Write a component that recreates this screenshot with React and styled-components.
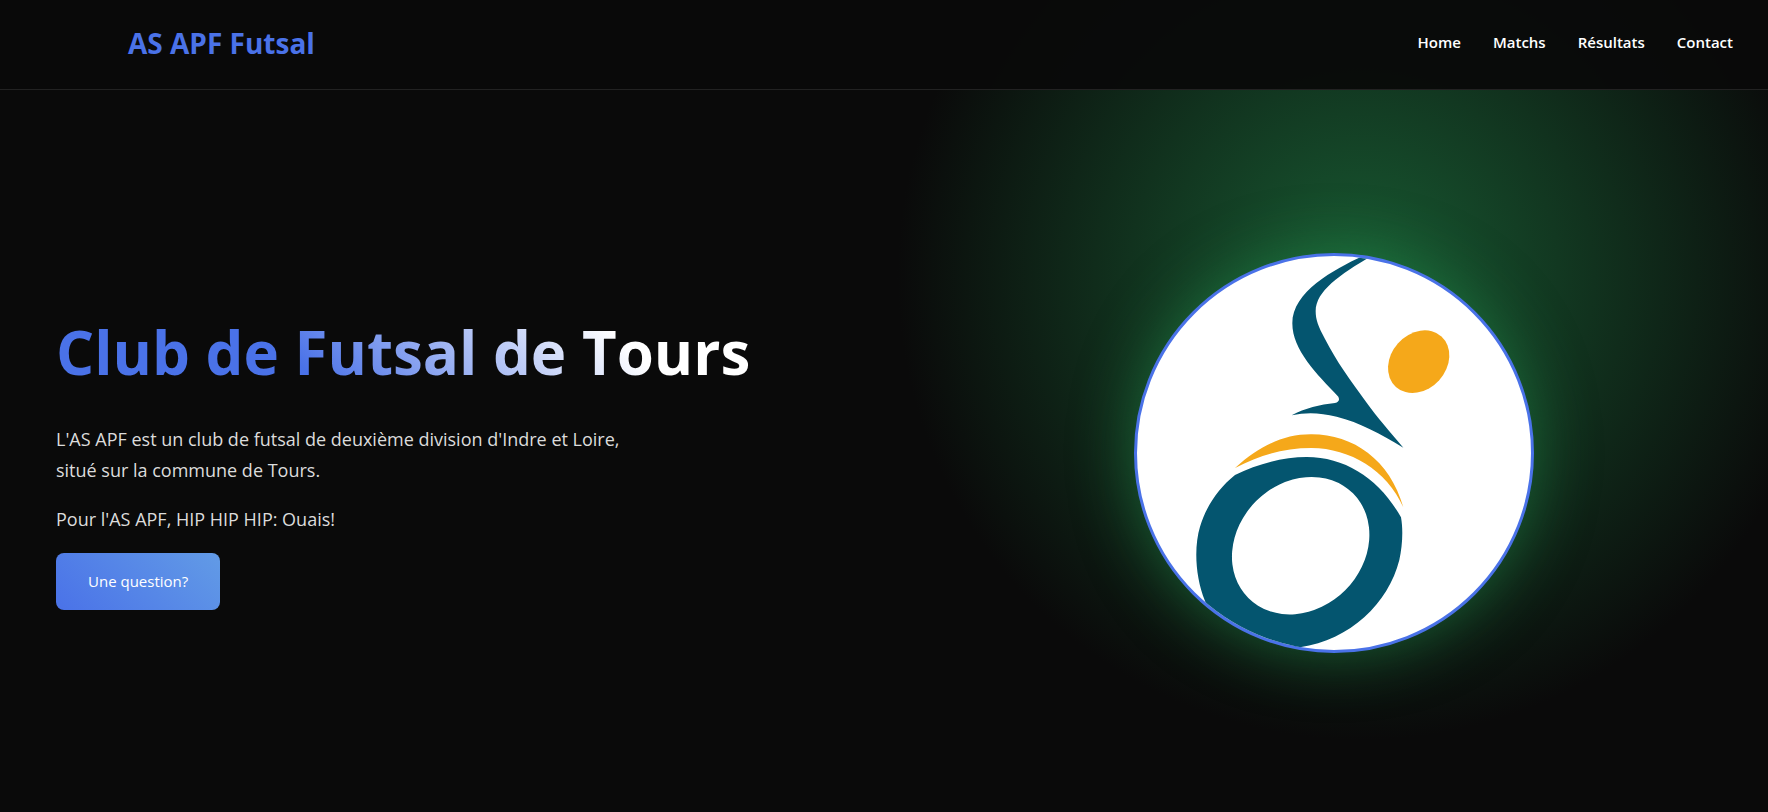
import React from "react";
import styled, { createGlobalStyle } from "styled-components";

const BLUE = "#4a72e8";
const TEAL = "#04556f";
const ORANGE = "#f5a81a";

const GlobalStyle = createGlobalStyle`
  * {
    box-sizing: border-box;
  }

  body {
    margin: 0;
    background: #0a0a0a;
    color: #fff;
    font-family: "Segoe UI", "Open Sans", "Noto Sans", sans-serif;
    line-height: 1.6;
  }
`;

const Page = styled("div")`
  display: flex;
  flex-direction: column;
  min-height: 100vh;
  background: radial-gradient(
    circle 464px at 77% 34%,
    #185a32 0%,
    #0a0a0a 100%
  );
`;

const Header = styled("header")`
  display: flex;
  align-items: center;
  justify-content: space-between;
  padding: 21px 35px 23px 128px;
  background: rgba(10, 10, 10, 0.95);
  border-bottom: 1px solid #222;
`;

const Brand = styled("a")`
  color: ${BLUE};
  font-size: 28px;
  font-weight: 700;
  text-decoration: none;
`;

const Nav = styled("nav")`
  display: flex;
  gap: 32px;
  padding-bottom: 2px;
`;

const NavLink = styled("a")`
  color: #fff;
  font-size: 15px;
  font-weight: 600;
  text-decoration: none;
`;

const Hero = styled("main")`
  flex: 1;
  display: grid;
  grid-template-columns: 1fr 1fr;
  gap: 72px;
  align-items: center;
  padding: 4px 32px 0 56px;
`;

const Content = styled("div")`
  display: flex;
  flex-direction: column;
  align-items: flex-start;
  padding-top: 18px;
`;

const Title = styled("h1")`
  margin: 0 0 34px;
  font-size: 60px;
  line-height: 76px;
  white-space: nowrap;
  color: transparent;
  background: linear-gradient(45deg, ${BLUE} 35%, #fff 80%);
  background-clip: text;
`;

const Text = styled("p")`
  max-width: 600px;
  margin: 0 0 18px;
  color: #dcdcdc;
  font-size: 18px;
  line-height: 31px;
`;

const Button = styled("button")`
  padding: 16px 32px;
  border: 0;
  border-radius: 8px;
  background: linear-gradient(45deg, ${BLUE}, #629be6);
  color: #fff;
  font-family: inherit;
  font-size: 15px;
  line-height: 25px;
  cursor: pointer;
`;

const Badge = styled("div")`
  justify-self: center;
  width: 400px;
  height: 400px;
  overflow: hidden;
  border: 3px solid ${BLUE};
  border-radius: 50%;
  background: #fff;
  box-shadow: 0 0 60px rgba(34, 139, 74, 0.6);
`;

const Logo = styled("svg")`
  display: block;
  width: 100%;
  height: 100%;
`;

function ClubLogo() {
  return (
    <Logo viewBox="51 48 1182 1182" role="img" aria-label="AS APF Futsal">
      <path
        fill={TEAL}
        d="M728 48C640 90 517 155 517 250C517 330 590 402 655 470Q662 485 645 489C600 494 555 504 515 526C560 516 600 518 650 530C720 548 780 580 850 623C810 575 770 530 740 488C690 420 650 365 615 297C595 260 587 240 587 213C588 150 665 100 768 40Z"
      />
      <ellipse
        cx="896"
        cy="365"
        rx="102"
        ry="83"
        fill={ORANGE}
        transform="rotate(-48 896 365)"
      />
      <path
        fill={ORANGE}
        d="M345 684C420 615 495 582 575 583C700 583 810 660 850 802C800 690 690 625 575 624C490 624 420 645 345 684Z"
      />
      <path
        fill={TEAL}
        d="M345 705C410 672 490 651 560 651C680 651 780 720 843 832C850 870 847 920 838 960C805 1090 690 1200 540 1222L500 1250L300 1200L255 1083C225 1010 222 920 240 860C258 800 295 745 345 705Z"
      />
      <ellipse
        cx="542"
        cy="917"
        rx="222"
        ry="189"
        fill="#fff"
        transform="rotate(-45 542 917)"
      />
    </Logo>
  );
}

export default function App() {
  return (
    <Page>
      <GlobalStyle />
      <Header>
        <Brand href="#home">AS APF Futsal</Brand>
        <Nav>
          <NavLink href="#home">Home</NavLink>
          <NavLink href="#matchs">Matchs</NavLink>
          <NavLink href="#resultats">Résultats</NavLink>
          <NavLink href="#contact">Contact</NavLink>
        </Nav>
      </Header>
      <Hero>
        <Content>
          <Title>Club de Futsal de Tours</Title>
          <Text>
            L'AS APF est un club de futsal de deuxième division d'Indre et
            Loire, situé sur la commune de Tours.
          </Text>
          <Text>Pour l'AS APF, HIP HIP HIP: Ouais!</Text>
          <Button type="button">Une question?</Button>
        </Content>
        <Badge>
          <ClubLogo />
        </Badge>
      </Hero>
    </Page>
  );
}
